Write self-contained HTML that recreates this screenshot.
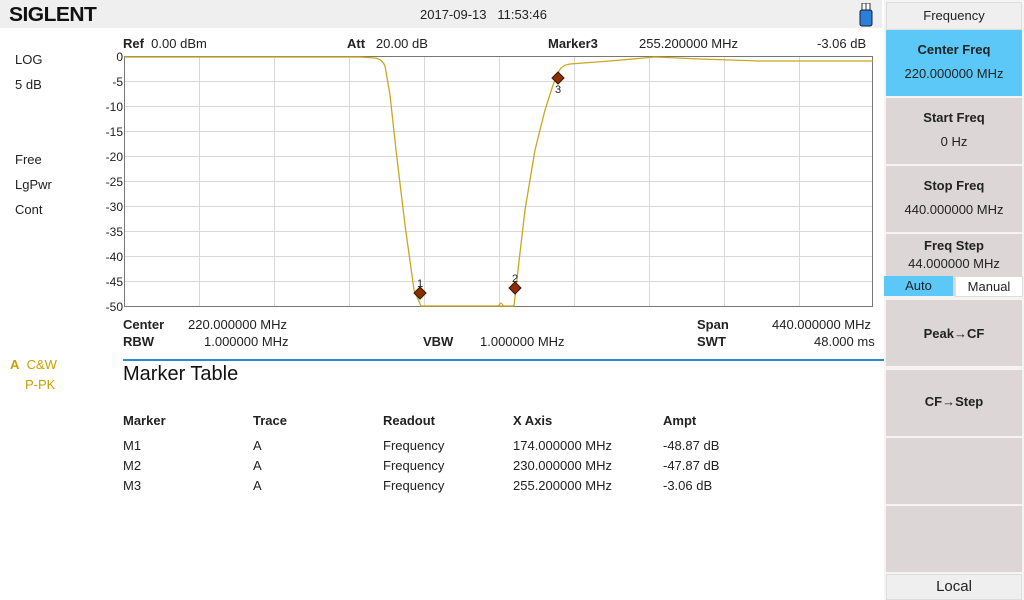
<!DOCTYPE html>
<html><head><meta charset="utf-8"><style>
body{margin:0;width:1024px;height:600px;position:relative;background:#fff;font-family:"Liberation Sans",sans-serif;font-size:13px;color:#222;overflow:hidden}
.a{position:absolute;white-space:nowrap}
.b{font-weight:bold}
.sk{position:absolute;left:886px;width:136px;background:#ddd6d6;text-align:center}
.sk .t{font-weight:bold;font-size:13px}
</style></head><body>
<div class="a" style="left:0;top:0;width:882px;height:28px;background:#efefef"></div>
<div class="a b" style="left:9px;top:4px;font-size:20px;letter-spacing:-0.5px;color:#111;font-family:'Liberation Sans',sans-serif;transform:scaleX(1.05);transform-origin:left">SIGLENT</div>
<div class="a" style="left:420px;top:7px">2017-09-13&nbsp;&nbsp;&nbsp;11:53:46</div>
<svg class="a" style="left:858px;top:3px" width="16" height="24"><rect x="4" y="0" width="8" height="7" fill="#fff" stroke="#333"/><line x1="8" y1="0" x2="8" y2="7" stroke="#333"/><rect x="2" y="7" width="12" height="16" rx="2" fill="#2b7fd8" stroke="#123"/></svg>

<div class="a" style="left:15px;top:52px">LOG</div>
<div class="a" style="left:15px;top:77px">5 dB</div>
<div class="a" style="left:15px;top:152px">Free</div>
<div class="a" style="left:15px;top:177px">LgPwr</div>
<div class="a" style="left:15px;top:202px">Cont</div>
<div class="a" style="left:10px;top:357px;color:#c8a000"><b>A</b>&nbsp; C&amp;W</div>
<div class="a" style="left:25px;top:377px;color:#c8a000">P-PK</div>

<div class="a" style="left:123px;top:36px"><b>Ref</b>&nbsp; 0.00 dBm</div>
<div class="a" style="left:347px;top:36px"><b>Att</b>&nbsp;&nbsp; 20.00 dB</div>
<div class="a b" style="left:548px;top:36px">Marker3</div>
<div class="a" style="left:639px;top:36px">255.200000 MHz</div>
<div class="a" style="left:817px;top:36px">-3.06 dB</div>

<svg class="a" style="left:0;top:0" width="884" height="320">
<g stroke="#d8d8d8" stroke-width="1">
<line x1="199.5" y1="56" x2="199.5" y2="306"/><line x1="274.5" y1="56" x2="274.5" y2="306"/><line x1="349.5" y1="56" x2="349.5" y2="306"/><line x1="424.5" y1="56" x2="424.5" y2="306"/><line x1="499.5" y1="56" x2="499.5" y2="306"/><line x1="574.5" y1="56" x2="574.5" y2="306"/><line x1="649.5" y1="56" x2="649.5" y2="306"/><line x1="724.5" y1="56" x2="724.5" y2="306"/><line x1="799.5" y1="56" x2="799.5" y2="306"/>
<line x1="124" y1="81.5" x2="873" y2="81.5"/><line x1="124" y1="106.5" x2="873" y2="106.5"/><line x1="124" y1="131.5" x2="873" y2="131.5"/><line x1="124" y1="156.5" x2="873" y2="156.5"/><line x1="124" y1="181.5" x2="873" y2="181.5"/><line x1="124" y1="206.5" x2="873" y2="206.5"/><line x1="124" y1="231.5" x2="873" y2="231.5"/><line x1="124" y1="256.5" x2="873" y2="256.5"/><line x1="124" y1="281.5" x2="873" y2="281.5"/>
</g>
<rect x="124.5" y="56.5" width="748" height="250" fill="none" stroke="#777"/>
<g font-family="Liberation Sans,sans-serif" font-size="12" fill="#222" text-anchor="end">
<text x="123" y="61">0</text><text x="123" y="86">-5</text><text x="123" y="111">-10</text><text x="123" y="136">-15</text><text x="123" y="161">-20</text><text x="123" y="186">-25</text><text x="123" y="211">-30</text><text x="123" y="236">-35</text><text x="123" y="261">-40</text><text x="123" y="286">-45</text><text x="123" y="311">-50</text>
</g>
<path d="M124,57 L360,57 L375,58 Q382,59 385,66 L390,95 L396,150 L405,225 L414,290 L421,306 L514,306 L518,270 L525,210 L535,150 L545,110 L553,85 L559,71 Q562,65 570,64 L610,61 L655,57 L700,59 L760,61 L873,61" fill="none" stroke="#c8a820" stroke-width="1.3"/>
<path d="M498,306 L501,303 L504,306" fill="none" stroke="#c8a820"/>
<g fill="#8a3000" stroke="#3a1500" stroke-width="1">
<path d="M420,287 L426,293 L420,299 L414,293Z"/><path d="M515,282 L521,288 L515,294 L509,288Z"/><path d="M558,72 L564,78 L558,84 L552,78Z"/>
</g>
<g font-family="Liberation Sans,sans-serif" font-size="11" fill="#222" text-anchor="middle">
<text x="420" y="287">1</text><text x="515" y="282">2</text><text x="558" y="93">3</text></g>
</svg>

<div class="a b" style="left:123px;top:317px">Center</div>
<div class="a" style="left:188px;top:317px">220.000000 MHz</div>
<div class="a b" style="left:123px;top:334px">RBW</div>
<div class="a" style="left:204px;top:334px">1.000000 MHz</div>
<div class="a b" style="left:423px;top:334px">VBW</div>
<div class="a" style="left:480px;top:334px">1.000000 MHz</div>
<div class="a b" style="left:697px;top:317px">Span</div>
<div class="a" style="left:772px;top:317px">440.000000 MHz</div>
<div class="a b" style="left:697px;top:334px">SWT</div>
<div class="a" style="left:814px;top:334px">48.000 ms</div>
<div class="a" style="left:123px;top:359px;width:761px;height:2px;background:#2a8ad0"></div>
<div class="a" style="left:123px;top:363px;font-size:20px;color:#111">Marker Table</div>

<div class="a b" style="left:123px;top:413px">Marker</div><div class="a b" style="left:253px;top:413px">Trace</div><div class="a b" style="left:383px;top:413px">Readout</div><div class="a b" style="left:513px;top:413px">X Axis</div><div class="a b" style="left:663px;top:413px">Ampt</div>
<div class="a" style="left:123px;top:438px">M1</div><div class="a" style="left:253px;top:438px">A</div><div class="a" style="left:383px;top:438px">Frequency</div><div class="a" style="left:513px;top:438px">174.000000 MHz</div><div class="a" style="left:663px;top:438px">-48.87 dB</div>
<div class="a" style="left:123px;top:458px">M2</div><div class="a" style="left:253px;top:458px">A</div><div class="a" style="left:383px;top:458px">Frequency</div><div class="a" style="left:513px;top:458px">230.000000 MHz</div><div class="a" style="left:663px;top:458px">-47.87 dB</div>
<div class="a" style="left:123px;top:478px">M3</div><div class="a" style="left:253px;top:478px">A</div><div class="a" style="left:383px;top:478px">Frequency</div><div class="a" style="left:513px;top:478px">255.200000 MHz</div><div class="a" style="left:663px;top:478px">-3.06 dB</div>

<div class="a" style="left:884px;top:0;width:140px;height:600px;background:#f4f4f4"></div>
<div class="sk" style="top:2px;height:26px;background:#efefef;border:1px solid #ddd;width:134px;line-height:26px">Frequency</div>
<div class="sk" style="top:30px;height:66px;background:#5bc8f8"><div class="t" style="margin-top:12px">Center Freq</div><div style="margin-top:9px">220.000000 MHz</div></div>
<div class="sk" style="top:98px;height:66px"><div class="t" style="margin-top:12px">Start Freq</div><div style="margin-top:9px">0 Hz</div></div>
<div class="sk" style="top:166px;height:66px"><div class="t" style="margin-top:12px">Stop Freq</div><div style="margin-top:9px">440.000000 MHz</div></div>
<div class="sk" style="top:234px;height:62px"><div class="t" style="margin-top:4px">Freq Step</div><div style="margin-top:3px">44.000000 MHz</div></div>
<div class="a" style="left:884px;top:276px;width:69px;height:20px;background:#5bc8f8;text-align:center;line-height:20px">Auto</div>
<div class="a" style="left:955px;top:276px;width:66px;height:19px;background:#fff;border:1px solid #ddd;text-align:center;line-height:19px">Manual</div>
<div class="sk" style="top:300px;height:66px"><div class="t" style="margin-top:26px">Peak→CF</div></div>
<div class="sk" style="top:370px;height:66px"><div class="t" style="margin-top:24px">CF→Step</div></div>
<div class="sk" style="top:438px;height:66px"></div>
<div class="sk" style="top:506px;height:66px"></div>
<div class="sk" style="top:574px;height:24px;background:#efefef;border:1px solid #ddd;width:134px;line-height:24px;font-size:15px">Local</div>
</body></html>
